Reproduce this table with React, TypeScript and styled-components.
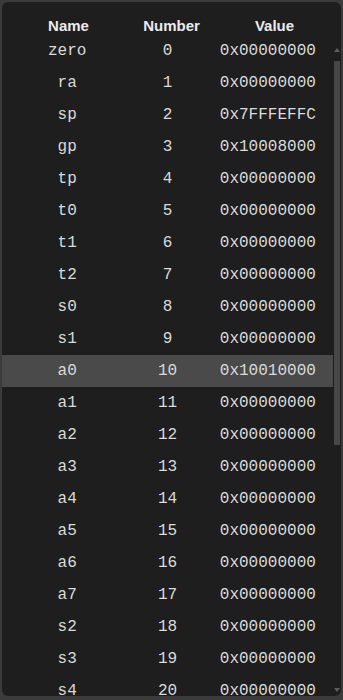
import React from "react";
import styled, { createGlobalStyle } from "styled-components";

const Global = createGlobalStyle`
  html, body { margin: 0; padding: 0; }
  body {
    background: #3b3b3b;
    width: 343px;
    height: 700px;
    overflow: hidden;
    box-sizing: border-box;
    padding: 2px 2px 4px 2px;
  }
  #root { height: 100%; }
`;

const Panel = styled.div`
  height: 694px;
  background: #1e1e1e;
  border-radius: 6px;
  overflow: hidden;
  display: flex;
  flex-direction: column;
`;

const HeaderRow = styled.div`
  display: grid;
  grid-template-columns: 1fr 1fr 1fr;
  padding: 15px 15px 0 15px;
  height: 33px;
  box-sizing: border-box;
  flex: none;
`;

const HeaderCell = styled.div`
  text-align: center;
  font-family: "Liberation Sans", Arial, sans-serif;
  font-weight: bold;
  font-size: 15px;
  line-height: 18px;
  color: #ebebeb;
`;

const BodyArea = styled.div`
  flex: 1;
  min-height: 0;
  display: flex;
`;

const List = styled.div`
  flex: 1;
  min-width: 0;
  overflow-y: auto;
  scrollbar-width: none;
  &::-webkit-scrollbar { display: none; }
`;

const Row = styled.div<{ $active?: boolean }>`
  display: grid;
  grid-template-columns: 1fr 1fr 1fr;
  height: 32px;
  align-items: center;
  padding: 0 15px;
  background: ${(p) => (p.$active ? "#4a4a4a" : "transparent")};
`;

const Cell = styled.div`
  text-align: center;
  font-family: "Liberation Mono", "Courier New", monospace;
  font-size: 16px;
  color: #dadada;
  white-space: nowrap;
`;

const Scrollbar = styled.div`
  width: 8px;
  flex: none;
  display: flex;
  flex-direction: column;
  padding-top: 9px;
  box-sizing: border-box;
`;

const ArrowButton = styled.div`
  height: 12px;
  flex: none;
  display: flex;
  align-items: center;
  justify-content: center;
`;

const Track = styled.div`
  flex: 1;
  padding: 5px 1px 0 1px;
  display: flex;
  flex-direction: column;
`;

const Thumb = styled.div`
  height: 384px;
  background: #474747;
  border-radius: 1px;
`;

const Arrow = ({ up }: { up?: boolean }) => (
  <svg width="6" height="4" viewBox="0 0 6 4">
    <polygon points={up ? "3,0 6,4 0,4" : "0,0 6,0 3,4"} fill="#5c5c5c" />
  </svg>
);

const regs: [string, string][] = [
  ["zero", "0x00000000"],
  ["ra", "0x00000000"],
  ["sp", "0x7FFFEFFC"],
  ["gp", "0x10008000"],
  ["tp", "0x00000000"],
  ["t0", "0x00000000"],
  ["t1", "0x00000000"],
  ["t2", "0x00000000"],
  ["s0", "0x00000000"],
  ["s1", "0x00000000"],
  ["a0", "0x10010000"],
  ["a1", "0x00000000"],
  ["a2", "0x00000000"],
  ["a3", "0x00000000"],
  ["a4", "0x00000000"],
  ["a5", "0x00000000"],
  ["a6", "0x00000000"],
  ["a7", "0x00000000"],
  ["s2", "0x00000000"],
  ["s3", "0x00000000"],
  ["s4", "0x00000000"],
  ["s5", "0x00000000"],
  ["s6", "0x00000000"],
  ["s7", "0x00000000"],
  ["s8", "0x00000000"],
  ["s9", "0x00000000"],
  ["s10", "0x00000000"],
  ["s11", "0x00000000"],
  ["t3", "0x00000000"],
  ["t4", "0x00000000"],
  ["t5", "0x00000000"],
  ["t6", "0x00000000"],
  ["pc", "0x00400000"],
];

export default function App() {
  return (
    <>
      <Global />
      <Panel>
        <HeaderRow>
          <HeaderCell>Name</HeaderCell>
          <HeaderCell>Number</HeaderCell>
          <HeaderCell>Value</HeaderCell>
        </HeaderRow>
        <BodyArea>
          <List>
            {regs.map(([name, val], i) => (
              <Row key={name} $active={name === "a0"}>
                <Cell>{name}</Cell>
                <Cell>{name === "pc" ? "" : i}</Cell>
                <Cell>{val}</Cell>
              </Row>
            ))}
          </List>
          <Scrollbar>
            <ArrowButton>
              <Arrow up />
            </ArrowButton>
            <Track>
              <Thumb />
            </Track>
            <ArrowButton>
              <Arrow />
            </ArrowButton>
          </Scrollbar>
        </BodyArea>
      </Panel>
    </>
  );
}
